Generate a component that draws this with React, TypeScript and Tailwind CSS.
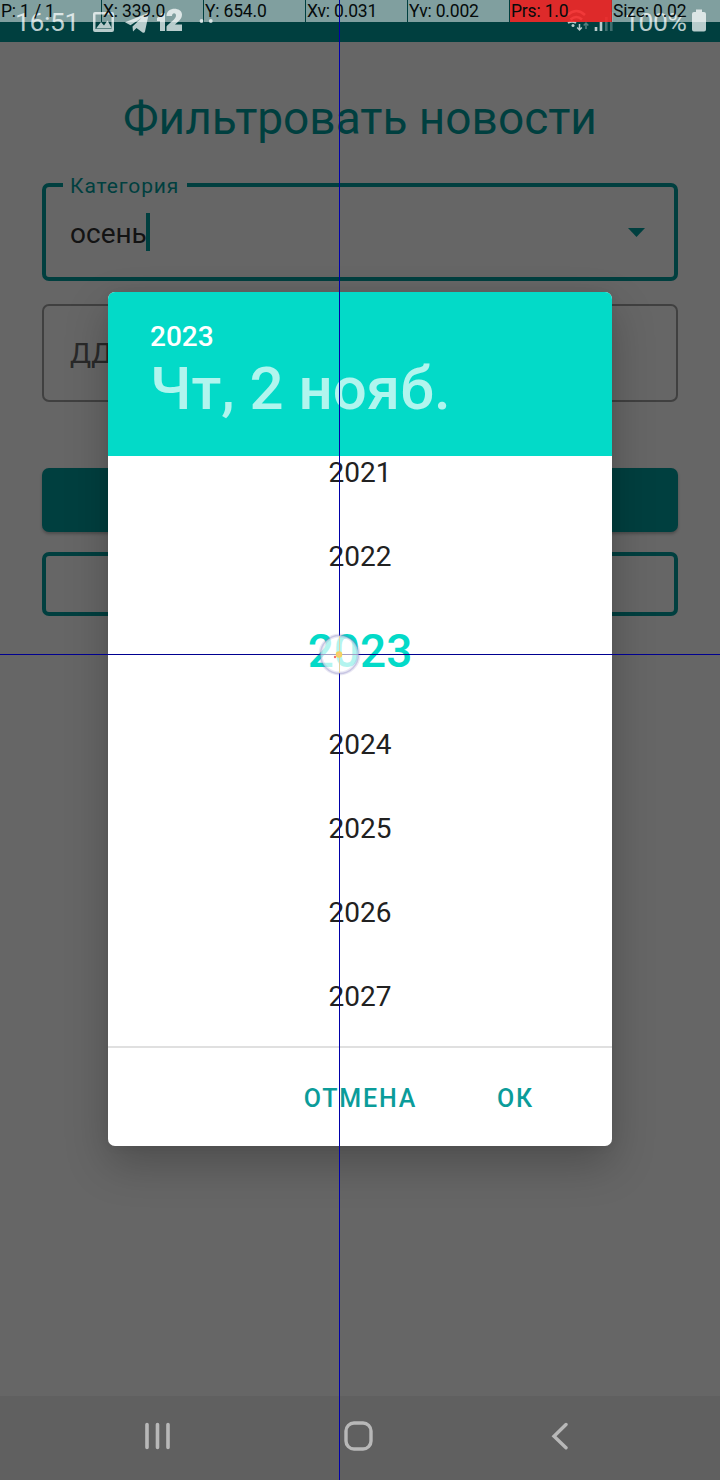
import React from 'react';

const pointerCells = ['P: 1 / 1', 'X: 339.0', 'Y: 654.0', 'Xv: 0.031', 'Yv: 0.002', 'Prs: 1.0', 'Size: 0.02'];
const years = [2021, 2022, 2023, 2024, 2025, 2026, 2027];

function StatusBar() {
  return (
    <header className="flex h-[42px] w-full items-start bg-[#003f3f] text-[#b8cccc]">
      <span className="ml-[15px] w-[78px] text-[26.500px] leading-[44px] tracking-[-0.4px]">16:51</span>
      <svg className="h-[42px] w-[130px]" viewBox="93 0 130 42" fill="currentColor">
        <path fillRule="evenodd" d="M95 12h17q2 0 2 2v16q0 2-2 2H95q-2 0-2-2V14q0-2 2-2zM95.500 14.500v14.500h16v-14.500z" />
        <path d="M96 28.500l5-6.500 3 3.500 3.500-5 4.500 8z" />
        <path d="M125 22.300L147 13.500q2-.8 1.500 1.500L145 31.500q-.5 2-2.500 1l-6-4.500-3.500 3.500-.5-5 9-8.500-11 7.300z" />
        <path d="M157 18l5-5h3v18h-5V21h-3z" />
        <path d="M166.500 16c0-10 15.500-9 15.500-1.500 0 5-4 7-7 10h7v6.500h-15.500v-4.500c3-4 9.500-7 9.500-11 0-3-4-3-4 .5z" />
        <circle cx="201.500" cy="21" r="1.900" />
        <circle cx="210.800" cy="21" r="1.900" />
      </svg>
      <svg className="ml-auto h-[42px] w-[50px]" viewBox="568 0 50 42" fill="none" stroke="currentColor">
        <g strokeWidth="2.600" opacity=".8">
          <path d="M568.500 15q9-8 17.500 0M571.500 19.500q6-5 11.500 0" />
        </g>
        <path d="M569 23q4-2.500 8 0" strokeWidth="2" />
        <circle cx="574" cy="25.500" r="1.500" fill="currentColor" stroke="none" />
        <path d="M580.500 24v6m-2.300-2.500l2.300 2.500 2.300-2.500" strokeWidth="1.500" />
        <path d="M587 29v-6m-2.300 2.500l2.300-2.500 2.300 2.500" strokeWidth="1.500" opacity=".45" />
        <path d="M597 31v-4M602 31v-9" strokeWidth="2.600" />
        <path d="M607.300 31V17M612.300 31V12" strokeWidth="2.600" opacity=".35" />
      </svg>
      <span className="ml-[7px] w-[65px] text-[26.500px] leading-[44px] tracking-[-0.4px]">100%</span>
      <svg className="mr-[14px] ml-[2px] h-[42px] w-[15px]" viewBox="691 0 15 42" fill="currentColor">
        <path d="M696 9.500h6v2.500h2q2 0 2 2v15.500q0 2-2 2h-10q-2 0-2-2V14q0-2 2-2h2z" />
      </svg>
    </header>
  );
}

function FilterForm() {
  return (
    <main className="flex flex-1 flex-col px-[42px] pt-[44px]">
      <h1 className="h-[97px] whitespace-nowrap text-center text-[46px] leading-[64px] text-[#003f3f]">Фильтровать новости</h1>
      <div className="relative flex h-[98px] items-center justify-between rounded-[7px] border-4 border-[#003f3f] pr-[29px] pl-6">
        <span className="absolute -top-[15px] left-[17px] h-[28px] bg-[#666] pr-2 pl-[7px] text-[21px] leading-[28px] tracking-[0.9px] text-[#003f3f]">Категория</span>
        <div className="flex items-center">
          <span className="h-[38px] text-[28px] leading-[42px] text-[#131313]">осень</span>
          <span className="-ml-px h-[38px] w-1 bg-[#003f3f]" />
        </div>
        <svg className="h-[9px] w-[17px]" viewBox="0 0 17 9"><path d="M0 0h17L8.500 9z" fill="#003f3f" /></svg>
      </div>
      <div className="mt-[23px] flex h-[98px] items-center rounded-[7px] border-2 border-[#404040] pt-[2px] pl-[26px] text-[28px] text-[#292929]">ДД</div>
      <div className="mt-[66px] h-16 rounded-[7px] bg-[#003f3f] shadow-[0_2px_3px_rgba(0,0,0,0.25)]" />
      <div className="mt-5 h-16 rounded-[7px] border-4 border-[#003f3f]" />
    </main>
  );
}

function NavBar() {
  return (
    <nav className="flex h-[84px] items-center bg-[#606060] pl-[144px] text-[#b8b8b8]">
      <svg className="-mt-1 h-[28px] w-[28px]" viewBox="0 0 28 28" fill="none" stroke="currentColor" strokeWidth="3.600" strokeLinecap="round">
        <path d="M3 2.500v23M13.500 2.500v23M24 2.500v23" />
      </svg>
      <svg className="-mt-1 ml-[172px] h-[30px] w-[30px]" viewBox="0 0 30 30" fill="none" stroke="currentColor" strokeWidth="3.400">
        <rect x="2" y="2" width="25" height="26" rx="8" />
      </svg>
      <svg className="-mt-1 ml-[177px] h-[28px] w-[18px]" viewBox="0 0 18 28" fill="none" stroke="currentColor" strokeWidth="3.400" strokeLinecap="round">
        <path d="M15 2.500L3 14.300l12 11.500" />
      </svg>
    </nav>
  );
}

function DatePicker() {
  return (
    <section className="flex h-[854px] w-[504px] flex-col overflow-hidden rounded-[7px] bg-white">
      <div className="h-[164px] shrink-0 bg-[#03dac8] pt-[26px] pl-[42px] font-medium">
        <div className="h-[36px] text-[28px] leading-[38px] text-white">2023</div>
        <div className="whitespace-nowrap text-[60px] leading-[70px] text-[#b1f5ee]">Чт, 2 нояб.</div>
      </div>
      <div className="h-[590px] shrink-0 overflow-hidden">
        <div className="-mt-[26px] flex flex-col text-center text-[28px] text-[#212121]">
          {years.map((y) =>
            y === 2023 ? (
              <div key={y} className="h-[104px] text-[46px] leading-[107px] font-medium text-[#03dac8]">{y}</div>
            ) : (
              <div key={y} className="h-[84px] leading-[86px]">{y}</div>
            ),
          )}
        </div>
      </div>
      <div className="flex h-[100px] shrink-0 items-center justify-end border-t-2 border-[#e0e0e0] pt-[4px] pr-[78px] text-[25px] font-medium tracking-[1.8px] text-[#0b9c9a]">
        <span className="mr-[80px]">ОТМЕНА</span>
        <span>ОК</span>
      </div>
    </section>
  );
}

function PointerOverlay() {
  return (
    <div className="absolute inset-0 overflow-hidden">
      <div className="flex h-[22px] text-[17.500px] leading-[22px] tracking-[-0.18px] text-[#050b0b]">
        {pointerCells.map((label) => (
          <div
            key={label}
            className={
              label.startsWith('Prs')
                ? 'mr-px w-[101px] bg-[#ff2727]/87 pl-px shadow-[1px_0_0_#c72424]'
                : label.startsWith('Size')
                  ? 'flex-1 bg-white/50 pl-px'
                  : 'mr-px w-[101px] bg-white/50 pl-px'
            }
          >
            {label}
          </div>
        ))}
      </div>
      <div className="absolute top-0 left-[339px] h-full w-px bg-[#0000a8]" />
      <div className="absolute top-[654px] left-0 h-px w-full bg-[#000090]" />
      <svg className="absolute top-[633px] left-[317px] h-[44px] w-[44px]" viewBox="0 0 44 44">
        <circle cx="22.500" cy="21.500" r="19" fill="#fff" fillOpacity=".7" stroke="#7470b8" strokeOpacity=".16" strokeWidth="4" />
        <circle cx="22.500" cy="21.500" r="19" fill="none" stroke="#7470b8" strokeOpacity=".28" strokeWidth="1.500" />
        <path d="M22.500 3v37" stroke="#f5df87" strokeOpacity=".7" />
        <path d="M4 21.500h37" stroke="#9890b5" strokeOpacity=".6" />
        <circle cx="22" cy="21.500" r="2.500" fill="#ffc27a" stroke="#f3d45c" strokeWidth="1.500" />
        <circle cx="18" cy="24" r="1.200" fill="#f56a6a" />
      </svg>
    </div>
  );
}

export default function App() {
  return (
    <div className="relative flex h-[1480px] w-[720px] flex-col overflow-hidden bg-[#666] font-['Roboto','Liberation_Sans',sans-serif]">
      <StatusBar />
      <FilterForm />
      <NavBar />
      <div className="absolute inset-x-0 top-[292px] flex justify-center">
        <div className="rounded-[7px] shadow-[0_18px_44px_rgba(0,0,0,0.24),0_0_12px_rgba(0,0,0,0.06)]">
          <DatePicker />
        </div>
      </div>
      <PointerOverlay />
    </div>
  );
}
